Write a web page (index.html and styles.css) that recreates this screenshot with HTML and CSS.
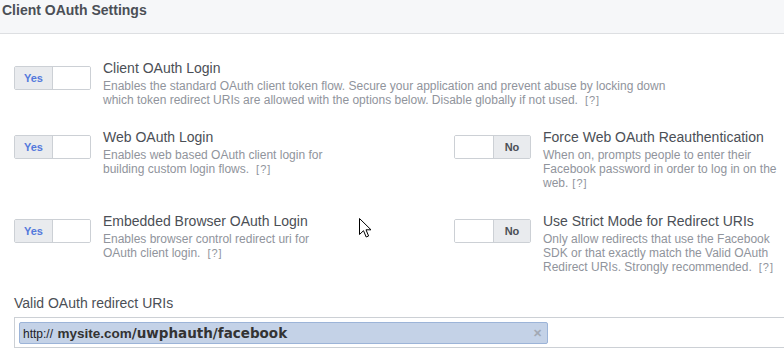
FILE: index.html
```html
<!DOCTYPE html>
<html>
<head>
<meta charset="utf-8">
<link rel="stylesheet" href="styles.css">
</head>
<body>
<div class="page">
  <div class="header"><h2 class="header-title">Client OAuth Settings</h2></div>
  <div class="content">
    <div class="setting setting-wide">
      <div class="toggle toggle-on"><span class="toggle-label">Yes</span><span class="toggle-blank"></span></div>
      <div class="setting-text">
        <div class="setting-title">Client OAuth Login</div>
        <div class="setting-desc">Enables the standard OAuth client token flow. Secure your application and prevent abuse by locking down which token redirect URIs are allowed with the options below. Disable globally if not used.<span class="help">[?]</span></div>
      </div>
    </div>
    <div class="setting-grid">
      <div class="setting">
        <div class="toggle toggle-on"><span class="toggle-label">Yes</span><span class="toggle-blank"></span></div>
        <div class="setting-text">
          <div class="setting-title">Web OAuth Login</div>
          <div class="setting-desc">Enables web based OAuth client login for building custom login flows.<span class="help">[?]</span></div>
        </div>
      </div>
      <div class="setting">
        <div class="toggle toggle-off"><span class="toggle-blank"></span><span class="toggle-label">No</span></div>
        <div class="setting-text">
          <div class="setting-title">Force Web OAuth Reauthentication</div>
          <div class="setting-desc">When on, prompts people to enter their Facebook password in order to log in on the web.<span class="help help-tight">[?]</span></div>
        </div>
      </div>
      <div class="setting">
        <div class="toggle toggle-on"><span class="toggle-label">Yes</span><span class="toggle-blank"></span></div>
        <div class="setting-text">
          <div class="setting-title">Embedded Browser OAuth Login</div>
          <div class="setting-desc">Enables browser control redirect uri for OAuth client login.<span class="help">[?]</span></div>
        </div>
      </div>
      <div class="setting">
        <div class="toggle toggle-off"><span class="toggle-blank"></span><span class="toggle-label">No</span></div>
        <div class="setting-text">
          <div class="setting-title">Use Strict Mode for Redirect URIs</div>
          <div class="setting-desc">Only allow redirects that use the Facebook SDK or that exactly match the Valid OAuth Redirect URIs. Strongly recommended.<span class="help">[?]</span></div>
        </div>
      </div>
    </div>
    <div class="field">
      <div class="field-label">Valid OAuth redirect URIs</div>
      <div class="token-box">
        <span class="token"><span class="token-text"><span class="token-scheme">http://</span> <span class="token-host">mysite.com</span><span class="token-path">/uwphauth/facebook</span></span><span class="token-remove">&#x2715;</span></span>
      </div>
    </div>
  </div>
  <svg class="cursor" width="13" height="20" viewBox="0 0 13 20"><path d="M0.5 0.5 L0.5 16.5 L4.5 12.7 L7.2 19 L9.6 18 L7 11.8 L12 11.8 Z" fill="#fff" stroke="#000" stroke-width="1" stroke-linejoin="miter"/></svg>
</div>
</body>
</html>
```

FILE: styles.css
```css
html, body {
  margin: 0;
  padding: 0;
  background: #fff;
  overflow: hidden;
}
body {
  font-family: "Liberation Sans", Arial, sans-serif;
  color: #4b4f56;
}
.page {
  position: relative;
  width: 784px;
  height: 355px;
}
.header {
  background: #f6f7f9;
  border-bottom: 1px solid #dddfe2;
  padding-left: 2px;
  box-sizing: border-box;
  height: 34px;
}
.header-title {
  margin: 0;
  font-size: 14px;
  font-weight: bold;
  line-height: 16px;
  padding-top: 2px;
  color: #4b4f56;
}
.content {
  padding: 26px 0 0 14px;
}
.setting {
  display: flex;
  align-items: flex-start;
}
.setting-wide .setting-desc {
  width: 580px;
}
.setting-grid {
  display: grid;
  grid-template-columns: 440px 1fr;
  row-gap: 23px;
  margin-top: 22px;
}
.toggle {
  display: flex;
  width: 77px;
  height: 24px;
  box-sizing: border-box;
  border: 1px solid #ccd0d5;
  border-radius: 2px;
  margin-top: 6px;
  flex: none;
  overflow: hidden;
}
.toggle-label {
  display: flex;
  align-items: center;
  justify-content: center;
  background: #e9ebee;
  font-size: 11px;
  font-weight: bold;
}
.toggle-on .toggle-label {
  width: 37px;
  border-right: 1px solid #ccd0d5;
  color: #5479dc;
}
.toggle-off .toggle-label {
  width: 36px;
  border-left: 1px solid #ccd0d5;
  color: #4b4f56;
}
.toggle-blank {
  flex: 1;
  background: #fff;
}
.setting-text {
  margin-left: 12px;
}
.setting-title {
  font-size: 14px;
  line-height: 16px;
  color: #4b4f56;
}
.setting-desc {
  margin-top: 3px;
  width: 242px;
  font-size: 12px;
  line-height: 14px;
  color: #90949c;
}
.help {
  display: inline-block;
  margin-left: 7px;
  font-size: 11px;
  line-height: 12px;
  letter-spacing: 1px;
}
.help-tight {
  margin-left: 4px;
}
.field {
  margin-top: 21px;
}
.field-label {
  font-size: 14px;
  line-height: 16px;
  color: #4b4f56;
}
.token-box {
  margin-top: 6px;
  margin-right: -20px;
  height: 31px;
  box-sizing: border-box;
  border: 1px solid #ccd0d5;
  padding: 4px 4px 0 4px;
}
.token {
  display: flex;
  align-items: center;
  justify-content: space-between;
  width: 529px;
  height: 22px;
  box-sizing: border-box;
  background: #c4d2e7;
  border: 1px solid #9cb4d8;
  border-radius: 2px;
  padding: 0 5px 0 3px;
  color: #1d2129;
}
.token-scheme {
  font-size: 12px;
}
.token-host {
  font-size: 13.5px;
  font-weight: bold;
  color: #333;
}
.token-path {
  font-family: "DejaVu Sans", Verdana, sans-serif;
  font-size: 13.5px;
  font-weight: bold;
  color: #333;
}
.token-remove {
  font-size: 11px;
  font-weight: bold;
  color: #a2a9b4;
}
.cursor {
  position: absolute;
  left: 359px;
  top: 218px;
}
```
